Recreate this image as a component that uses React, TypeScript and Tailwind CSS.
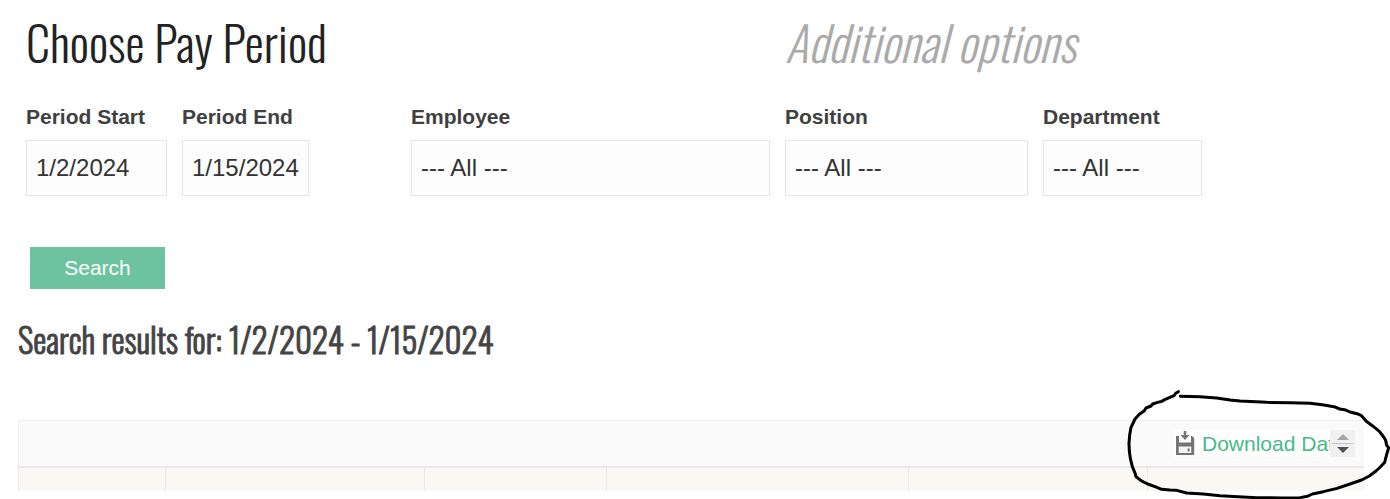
import React, { useState } from 'react';

interface FieldProps {
    id: string;
    label: string;
    className: string;
    children: React.ReactNode;
}

const controlClass = 'block w-full h-14 appearance-none rounded-none border border-[#e6e6e6] bg-[#fdfdfd] px-[9px] text-2xl text-[#333] outline-none';

const Field: React.FC<FieldProps> = ({ id, label, className, children }) => (
    <div className={className}>
        <label htmlFor={id} className="block mb-[11px] text-[21px] leading-6 font-bold text-[#404040] whitespace-nowrap">{label}</label>
        {children}
    </div>
);

const AllSelect: React.FC<{ id: string }> = ({ id }) => (
    <select id={id} className={controlClass}>
        <option>--- All ---</option>
    </select>
);

const SaveIcon: React.FC = () => (
    <svg width="20" height="25" viewBox="0 0 20 25" className="shrink-0" aria-hidden="true">
        <path d="M8.700 0h2.600v4h3.200L10 9 5.500 4h3.200z" fill="#747474" />
        <path d="M1 5h3v6.500h12V5h1l2.200 2v17H1z" fill="#747474" />
        <path d="M3.700 15.500h12.600V22H3.700z" fill="#f6f6f6" />
        <path d="M12.500 17.500h2v3h-2z" fill="#747474" />
    </svg>
);

// Pen mark drawn around the download link
const PenMark: React.FC = () => (
    <svg
        width="280"
        height="119"
        viewBox="0 0 840 357"
        className="pointer-events-none absolute -top-10 -right-[26px]"
        fill="none"
        stroke="#000"
        strokeWidth="9"
        strokeLinecap="round"
        strokeLinejoin="round"
        aria-hidden="true"
    >
        <path d="M205 35L197 40L192 47L178 53L164 59L155 64L143 67L128 72L123 78L108 84L103 92L88 103L75 117L68 132L63 142L59 165L57 190L58 213L61 235L67 260L75 279L78 290L93 302L113 312L135 320L155 328L180 330L200 331L230 339L280 342L330 347L385 350L440 353L520 354L570 353L592 349L607 342L640 335L681 325L720 312L755 300L778 288L798 273L811 261L824 247L829 227L836 203L830 196L827 181L819 168L808 154L787 137L769 124L753 106L741 101L720 96L704 89L689 87L672 80L637 74L600 70L540 68L470 67L390 63L360 60L320 54L270 50L211 49" />
    </svg>
);

const columns = ['w-[148px]', 'w-[259px]', 'w-[182px]', 'w-[302px]', 'w-[239px]', ''];

export default function App() {
    const [start, setStart] = useState('1/2/2024');
    const [end, setEnd] = useState('1/15/2024');

    return (
        <main className="overflow-hidden bg-white pb-2 font-['Liberation_Sans',Arial,sans-serif]">
            <form onSubmit={(e) => e.preventDefault()}>
                <div className="grid grid-cols-[759fr_579fr] px-[26px] pt-[6px]">
                    <section className="pr-[15px]">
                        <h1 className="mb-[27px] text-5xl leading-[72px] font-light whitespace-nowrap text-[#222] font-['Oswald',sans-serif]">Choose Pay Period</h1>
                        <div className="flex">
                            <Field id="start" label="Period Start" className="mr-[15px] w-[141px]">
                                <input id="start" type="text" value={start} onChange={(e) => setStart(e.target.value)} className={controlClass} />
                            </Field>
                            <Field id="end" label="Period End" className="mr-[102px] w-[127px]">
                                <input id="end" type="text" value={end} onChange={(e) => setEnd(e.target.value)} className={controlClass} />
                            </Field>
                            <Field id="employee" label="Employee" className="min-w-0 flex-1">
                                <AllSelect id="employee" />
                            </Field>
                        </div>
                    </section>
                    <section>
                        <h1 className="mb-[27px] text-5xl leading-[72px] font-light italic whitespace-nowrap text-[#aaa] font-['Oswald',sans-serif]">Additional options</h1>
                        <div className="flex gap-[15px]">
                            <Field id="position" label="Position" className="w-[243px]">
                                <AllSelect id="position" />
                            </Field>
                            <Field id="department" label="Department" className="w-[159px]">
                                <AllSelect id="department" />
                            </Field>
                        </div>
                    </section>
                </div>
                <button type="submit" className="mt-[51px] ml-[30px] block h-[42px] w-[135px] bg-[#6dc3a0] text-[21px] text-white">Search</button>
            </form>

            <h2 className="mt-[23px] ml-[18px] text-[33px] leading-[56px] font-light whitespace-nowrap text-[#444] font-['Oswald',sans-serif] [-webkit-text-stroke:1px_#444]">Search results for: 1/2/2024 - 1/15/2024</h2>

            <div className="relative mt-[52px] mr-[26px] ml-[18px]">
                <div className="flex h-[46px] items-center justify-end border-t border-l border-[#eee] bg-[#fafafa] pr-[9px]">
                    <div className="flex h-[27px] w-[182px] bg-white">
                        <a href="#download" className="flex min-w-0 flex-1 items-center gap-[7px] overflow-hidden pl-[2px] text-[21px] leading-6 whitespace-nowrap text-[#48b98b]">
                            <SaveIcon />
                            Download Data
                        </a>
                        <div className="flex w-[25px] shrink-0 flex-col bg-[#f0f0f0] px-[2px]">
                            <button type="button" aria-label="Scroll up" className="flex flex-1 items-end justify-center border-b border-[#c4c4c4] pb-[3px]">
                                <svg width="12" height="6" viewBox="0 0 12 6"><path d="M6 0l6 6H0z" fill="#a3a3a3" /></svg>
                            </button>
                            <button type="button" aria-label="Scroll down" className="flex flex-1 items-start justify-center pt-[3px]">
                                <svg width="12" height="6" viewBox="0 0 12 6"><path d="M6 6l6-6H0z" fill="#505050" /></svg>
                            </button>
                        </div>
                    </div>
                </div>
                <table className="w-full table-fixed border-separate border-spacing-0 border-t-2 border-[#e8e8e8] bg-[#f9f8f4]">
                    <thead>
                        <tr>
                            {columns.map((width, i) => (
                                <th key={i} className={`h-[23px] p-0 border-[#e8e8e8] ${i === 0 ? 'border-l' : ''} ${i < 5 ? 'border-r' : ''} ${width}`} />
                            ))}
                        </tr>
                    </thead>
                </table>
                <PenMark />
            </div>
        </main>
    );
}
